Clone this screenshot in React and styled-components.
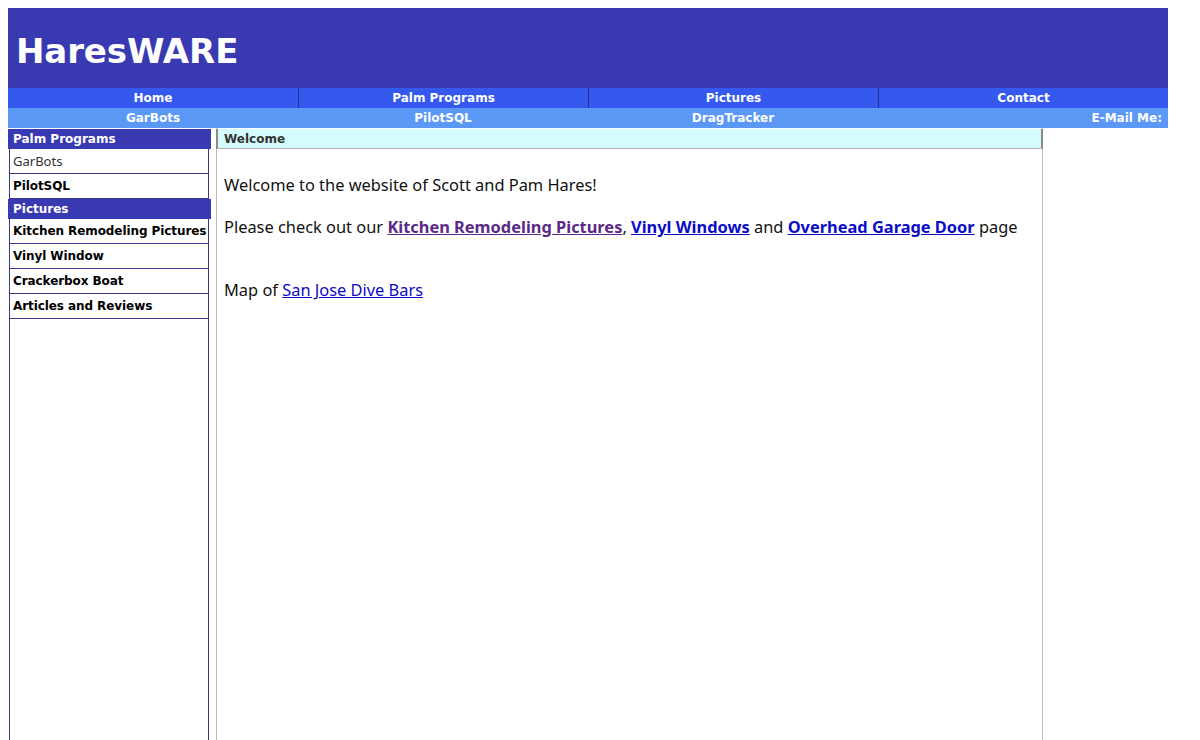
import styled, { createGlobalStyle } from 'styled-components';

const GlobalStyle = createGlobalStyle`
  body {
    margin: 8px;
    background: #fff;
    font-family: "DejaVu Sans", Verdana, sans-serif;
  }
`;

const Page = styled.div`
  width: 1160px;
  height: 732px;
  display: flex;
  flex-direction: column;
  overflow: hidden;
`;

const Banner = styled.div`
  height: 80px;
  background: #3939b2;
  display: flex;
  align-items: center;
  padding-left: 8px;
`;

const Title = styled.h1`
  margin: 0;
  color: #fff;
  font-family: "DejaVu Sans", Verdana, sans-serif;
  font-size: 34px;
  font-weight: bold;
  letter-spacing: -0.1px;
  padding-top: 5px;
`;

const NavRow = styled.div`
  display: grid;
  grid-template-columns: repeat(4, 1fr);
  height: 20px;
  background: ${(p) => p.$bg};
`;

const NavCell = styled.div`
  color: #fff;
  font-size: 12px;
  font-weight: bold;
  line-height: 21px;
  text-align: ${(p) => p.$align || 'center'};
  padding-right: ${(p) => (p.$align === 'right' ? '6px' : '0')};
  border-left: ${(p) => (p.$sep ? '1px solid #26309a' : 'none')};
`;

const Body = styled.div`
  flex: 1;
  display: flex;
  gap: 5px;
  min-height: 0;
`;

const Sidebar = styled.div`
  width: 203px;
  display: flex;
  flex-direction: column;
`;

const SideHead = styled.div`
  background: #3939b2;
  color: #fff;
  font-size: 12px;
  font-weight: bold;
  height: 20px;
  line-height: 21px;
  padding-left: 5px;
  margin-top: ${(p) => (p.$first ? '1px' : '0')};
`;

const SideItem = styled.div`
  height: 24px;
  line-height: 24px;
  margin: 0 2px 0 1px;
  border-left: 1px solid #3a3a88;
  border-right: 1px solid #3a3a88;
  border-bottom: 1px solid #3a3a88;
  padding-left: 3px;
  font-size: ${(p) => (p.$plain ? '13px' : '12px')};
  font-weight: ${(p) => (p.$plain ? 'normal' : 'bold')};
  letter-spacing: ${(p) => (p.$plain ? '0' : '-0.08px')};
  color: ${(p) => (p.$plain ? '#333' : '#000')};
  font-family: ${(p) => (p.$plain ? '"Noto Sans", sans-serif' : '"DejaVu Sans", Verdana, sans-serif')};
  white-space: nowrap;
  overflow: hidden;
`;

const SideFill = styled.div`
  flex: 1;
  margin: 0 2px 0 1px;
  border-left: 1px solid #3a3a88;
  border-right: 1px solid #3a3a88;
`;

const Main = styled.div`
  width: 825px;
  border-left: 1px solid #bdbdbd;
  border-right: 1px solid #bdbdbd;
  display: flex;
  flex-direction: column;
`;

const MainHead = styled.div`
  margin: 1px -1px 0;
  height: 19px;
  line-height: 20px;
  background: #d5fcfc;
  border-left: 2px solid #8a8a8a;
  border-right: 2px solid #8a8a8a;
  border-bottom: 1px solid #b0b0b0;
  padding-left: 6px;
  font-size: 12px;
  font-weight: bold;
  color: #333;
`;

const Content = styled.div`
  padding: 25px 7px 0;
  font-family: "Noto Sans", "Open Sans", sans-serif;
  font-size: 16.4px;
  color: #111;
`;

const Para = styled.p`
  margin: ${(p) => p.$top || '0'} 0 0;
  line-height: 22px;
`;

const Link = styled.a`
  color: ${(p) => (p.$visited ? '#5a2a86' : '#0b0bc8')};
  font-weight: ${(p) => (p.$bold ? 'bold' : 'normal')};
  text-decoration: underline;
`;

const topNav = ['Home', 'Palm Programs', 'Pictures', 'Contact'];

const App = () => (
  <>
    <GlobalStyle />
    <Page>
      <Banner>
        <Title>HaresWARE</Title>
      </Banner>
      <NavRow $bg="#3559ee">
        {topNav.map((t, i) => (
          <NavCell key={t} $sep={i > 0}>{t}</NavCell>
        ))}
      </NavRow>
      <NavRow $bg="#5b98f6">
        <NavCell>GarBots</NavCell>
        <NavCell>PilotSQL</NavCell>
        <NavCell>DragTracker</NavCell>
        <NavCell $align="right">E-Mail Me:</NavCell>
      </NavRow>
      <Body>
        <Sidebar>
          <SideHead $first>Palm Programs</SideHead>
          <SideItem $plain>GarBots</SideItem>
          <SideItem>PilotSQL</SideItem>
          <SideHead>Pictures</SideHead>
          <SideItem>Kitchen Remodeling Pictures</SideItem>
          <SideItem>Vinyl Window</SideItem>
          <SideItem>Crackerbox Boat</SideItem>
          <SideItem>Articles and Reviews</SideItem>
          <SideFill />
        </Sidebar>
        <Main>
          <MainHead>Welcome</MainHead>
          <Content>
            <Para>Welcome to the website of Scott and Pam Hares!</Para>
            <Para $top="20px">
              Please check out our <Link href="#" $bold $visited>Kitchen Remodeling Pictures</Link>,{' '}
              <Link href="#" $bold>Vinyl Windows</Link> and{' '}
              <Link href="#" $bold>Overhead Garage Door</Link> page
            </Para>
            <Para $top="41px">
              Map of <Link href="#">San Jose Dive Bars</Link>
            </Para>
          </Content>
        </Main>
      </Body>
    </Page>
  </>
);

export default App;
